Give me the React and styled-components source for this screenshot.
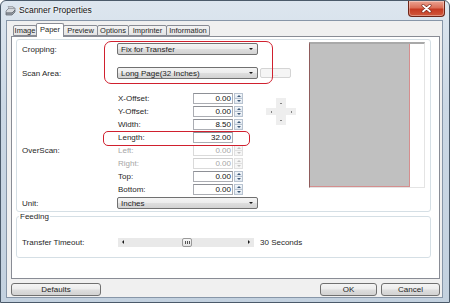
import React from 'react';
import styled, { createGlobalStyle, css } from 'styled-components';

const GlobalStyle = createGlobalStyle`
  * { box-sizing: border-box; }
  html, body { margin: 0; padding: 0; background: #fff; }
  body {
    font-family: "Liberation Sans", Arial, sans-serif;
    font-size: 8px;
    line-height: 9px;
    color: #1f1f1f;
  }
`;

const triangle = (dir, size, color) => {
  const t = `${size}px solid transparent`;
  const c = `${size}px solid ${color}`;
  if (dir === 'up') return css`border-left: ${t}; border-right: ${t}; border-bottom: ${c};`;
  if (dir === 'down') return css`border-left: ${t}; border-right: ${t}; border-top: ${c};`;
  if (dir === 'left') return css`border-top: ${t}; border-bottom: ${t}; border-right: ${c};`;
  return css`border-top: ${t}; border-bottom: ${t}; border-left: ${c};`;
};

const Tri = styled.span`
  display: block;
  width: 0;
  height: 0;
  ${p => triangle(p.$dir, p.$size || 2, p.$color || '#1a1a1a')}
`;

const Window = styled.div`
  width: 450px;
  height: 303px;
  display: flex;
  flex-direction: column;
  border: 1px solid #4b5a6a;
  border-radius: 6px 6px 0 0;
  background: linear-gradient(180deg, #dde6ef 0%, #cbd8e5 35%, #c3d1df 100%);
  overflow: hidden;
`;

const TitleBar = styled.div`
  height: 19px;
  flex: none;
  display: flex;
  align-items: flex-start;
  padding-left: 4px;
`;

const TitleIcon = styled.svg`
  margin-top: 4px;
  flex: none;
`;

const TitleText = styled.span`
  margin: 5px 0 0 3px;
  font-size: 8.5px;
  color: #111;
  text-shadow: 0 0 4px #fff, 0 0 2px #fff;
`;

const CloseButton = styled.div`
  margin-left: auto;
  margin-right: 4px;
  width: 37px;
  height: 16px;
  display: flex;
  align-items: center;
  justify-content: center;
  border: 1px solid #6e2417;
  border-top: none;
  border-radius: 0 0 4px 4px;
  background: linear-gradient(180deg, #eba493 0%, #dc6f58 45%, #c63a22 55%, #d0583c 100%);
  box-shadow: inset 0 0 0 1px rgba(255, 255, 255, 0.35);
`;

const Client = styled.div`
  flex: none;
  height: 278px;
  margin: 0 6px 0 5px;
  background: #f0f0f0;
  border: 1px solid #8796a8;
  padding-top: 2px;
  display: flex;
  flex-direction: column;
`;

const TabRow = styled.div`
  display: flex;
  align-items: flex-end;
  height: 14px;
  padding-left: 7px;
  margin-bottom: -1px;
  position: relative;
  z-index: 1;
`;

const Tab = styled.div`
  width: ${p => p.$w}px;
  height: ${p => (p.$active ? 14 : 11)}px;
  margin-bottom: ${p => (p.$active ? 0 : 1)}px;
  margin-left: -1px;
  display: flex;
  align-items: center;
  justify-content: center;
  font-size: 7.5px;
  border: 1px solid #898c95;
  border-bottom: ${p => (p.$active ? 'none' : '1px solid #898c95')};
  border-radius: 2px 2px 0 0;
  background: ${p => (p.$active ? '#fff' : 'linear-gradient(180deg, #f3f3f3 0%, #e4e4e4 100%)')};
  padding-bottom: ${p => (p.$active ? 2 : 0)}px;
`;

const Panel = styled.div`
  width: 429px;
  height: 243px;
  margin-left: 4px;
  background: #fff;
  border: 1px solid #898c95;
  padding: 2px 0 0 4px;
`;

const GroupBox = styled.div`
  position: relative;
  width: 415px;
  height: 173px;
  border: 1px solid #d5dfe5;
  border-radius: 3px;
  padding: 3px 0 0 5px;
  display: flex;
`;

const FormColumn = styled.div`
  width: 287px;
  flex: none;
`;

const FieldRow = styled.div`
  display: flex;
  align-items: center;
  height: 12px;
  margin-top: ${p => p.$mt || 0}px;
`;

const Label = styled.span`
  width: ${p => p.$w || 95}px;
  flex: none;
  padding-left: ${p => p.$pl || 0}px;
  color: ${p => (p.$disabled ? '#a6a6a6' : '#1f1f1f')};
  white-space: nowrap;
`;

const Select = styled.div`
  width: ${p => p.$w}px;
  height: 12px;
  flex: none;
  display: flex;
  align-items: center;
  justify-content: space-between;
  padding: 0 4px 0 3px;
  border: 1px solid #707070;
  border-radius: 2px;
  background: linear-gradient(180deg, #f4f4f4 0%, #ececec 48%, #dedede 52%, #d2d2d2 100%);
`;

const BrowseButton = styled.div`
  width: 31px;
  height: 10px;
  margin-left: 2px;
  display: flex;
  align-items: flex-end;
  justify-content: center;
  border: 1px solid #d4d4d4;
  border-radius: 2px;
  background: #f5f5f5;
  color: #c0c0c0;
  font-size: 6px;
  line-height: 6px;
`;

const OffsetBlock = styled.div`
  display: flex;
  margin-top: 14px;
`;

const OffsetRows = styled.div`
  display: flex;
  flex-direction: column;
  gap: 2px;
`;

const OffsetRow = styled.div`
  display: grid;
  grid-template-columns: 95px 76px 40px 10px;
  align-items: center;
  height: 11px;
`;

const NumField = styled.div`
  width: 40px;
  height: 11px;
  border: 1px solid ${p => (p.$disabled ? '#dadada' : '#abadb3')};
  border-top-color: ${p => (p.$disabled ? '#d0d0d0' : '#8e9096')};
  background: #fff;
  text-align: right;
  padding-right: 1px;
  line-height: 9px;
  color: ${p => (p.$disabled ? '#a6a6a6' : '#111')};
`;

const Spin = styled.div`
  width: 9px;
  height: 11px;
  margin-left: 1px;
  display: flex;
  flex-direction: column;
`;

const SpinHalf = styled.div`
  flex: 1;
  display: flex;
  align-items: center;
  justify-content: center;
  border: 1px solid ${p => (p.$disabled ? '#e0e0e0' : '#b8c3d0')};
  background: ${p => (p.$disabled ? '#f6f6f6' : 'linear-gradient(180deg, #f5f8fb 0%, #dfe7f0 100%)')};
  & + & { border-top: none; }
`;

const Pad = styled.div`
  margin: 5px 0 0 23px;
  display: grid;
  grid-template-columns: 10px 10px 10px;
  grid-template-rows: 10px 7px 10px;
  align-self: flex-start;
`;

const PadCell = styled.div`
  grid-column: ${p => p.$col};
  grid-row: ${p => p.$row};
  background: #eeeeee;
  display: flex;
  align-items: center;
  justify-content: center;
`;

const Preview = styled.div`
  width: 116px;
  height: 146px;
  margin-top: -1px;
  flex: none;
  background: #fff;
  border: 1px solid #e4e4e4;
  border-left: 1px solid #8f5b5b;
  border-top: 2px solid #a9a9a9;
`;

const Page = styled.div`
  width: 100px;
  height: 100%;
  background: #c0c0c0;
  border-right: 1px solid #d48e8e;
  border-bottom: 1px solid #d48e8e;
`;

const Highlight = styled.div`
  position: absolute;
  left: ${p => p.$x}px;
  top: ${p => p.$y}px;
  width: ${p => p.$w}px;
  height: ${p => p.$h}px;
  border: 1.5px solid #d0202e;
  border-radius: ${p => p.$r}px;
  pointer-events: none;
`;

const Fieldset = styled.fieldset`
  width: 415px;
  margin: 0;
  padding: 0;
  border: 1px solid #d5dfe5;
  border-radius: 3px;
  min-inline-size: 0;
`;

const Legend = styled.legend`
  margin-left: 2px;
  padding: 0 1px;
  line-height: 9px;
`;

const TimeoutRow = styled.div`
  display: flex;
  align-items: center;
  height: 10px;
  margin: 16px 0 10px;
  padding-left: 5px;
`;

const Slider = styled.div`
  position: relative;
  width: 136px;
  height: 9px;
  display: flex;
  align-items: center;
  justify-content: space-between;
  padding: 0 4px;
  background: #e9e9e9;
`;

const Thumb = styled.div`
  position: absolute;
  top: 0;
  left: ${p => p.$pos}px;
  width: 10px;
  height: 9px;
  display: flex;
  align-items: center;
  justify-content: center;
  gap: 1px;
  border: 1px solid #9a9a9a;
  border-radius: 2px;
  background: linear-gradient(180deg, #f7f7f7 0%, #e2e2e2 100%);
`;

const Grip = styled.span`
  width: 1px;
  height: 3px;
  background: #555;
`;

const TimeoutValue = styled.span`
  margin-left: 6px;
`;

const ButtonRow = styled.div`
  display: flex;
  gap: 4px;
  height: 13px;
  margin-top: 4px;
  padding: 0 2px 0 4px;
`;

const Button = styled.div`
  width: ${p => p.$w}px;
  height: 13px;
  margin-right: ${p => (p.$push ? 'auto' : '0')};
  display: flex;
  align-items: center;
  justify-content: center;
  border: 1px solid #707070;
  border-radius: 3px;
  background: linear-gradient(180deg, #f4f4f4 0%, #ececec 48%, #dedede 52%, #d2d2d2 100%);
`;

const tabs = [
  ['Image', 24],
  ['Paper', 28],
  ['Preview', 35],
  ['Options', 32],
  ['Imprinter', 39],
  ['Information', 44],
];

const offsets = [
  { group: '', label: 'X-Offset:', value: '0.00' },
  { group: '', label: 'Y-Offset:', value: '0.00' },
  { group: '', label: 'Width:', value: '8.50' },
  { group: '', label: 'Length:', value: '32.00', noSpin: true },
  { group: 'OverScan:', label: 'Left:', value: '0.00', disabled: true },
  { group: '', label: 'Right:', value: '0.00', disabled: true },
  { group: '', label: 'Top:', value: '0.00' },
  { group: '', label: 'Bottom:', value: '0.00' },
];

function Spinner({ disabled }) {
  const c = disabled ? '#c4c4c4' : '#3d5878';
  return (
    <Spin>
      <SpinHalf $disabled={disabled}><Tri $dir="up" $size={2} $color={c} /></SpinHalf>
      <SpinHalf $disabled={disabled}><Tri $dir="down" $size={2} $color={c} /></SpinHalf>
    </Spin>
  );
}

function ScannerIcon() {
  return (
    <TitleIcon width="11" height="11" viewBox="0 0 11 11">
      <path d="M1 6 L4 3 L10 3 L10 5 L7 8 L1 8 Z" fill="#d6d9dd" stroke="#6a7078" strokeWidth="0.7" />
      <path d="M1 8 L7 8 L10 5 L10 7 L7 10 L1 10 Z" fill="#9aa0a8" stroke="#5a6068" strokeWidth="0.7" />
      <path d="M3 1.5 L8 1.5 L9 3 L4 3 Z" fill="#eef0f2" stroke="#7a8088" strokeWidth="0.6" />
    </TitleIcon>
  );
}

export default function App() {
  const timeout = 30;
  const thumbPos = Math.round((timeout / 60) * 128);

  return (
    <>
      <GlobalStyle />
      <Window>
        <TitleBar>
          <ScannerIcon />
          <TitleText>Scanner Properties</TitleText>
          <CloseButton>
            <svg width="11" height="9" viewBox="0 0 11 9">
              <path d="M2 1.5 L9 7.5 M9 1.5 L2 7.5" stroke="#7a2a1e" strokeWidth="3" strokeLinecap="round" />
              <path d="M2 1.5 L9 7.5 M9 1.5 L2 7.5" stroke="#fff" strokeWidth="1.7" strokeLinecap="round" />
            </svg>
          </CloseButton>
        </TitleBar>

        <Client>
          <TabRow>
            {tabs.map(([name, w]) => (
              <Tab key={name} $w={w} $active={name === 'Paper'}>{name}</Tab>
            ))}
          </TabRow>

          <Panel>
            <GroupBox>
              <FormColumn>
                <FieldRow>
                  <Label>Cropping:</Label>
                  <Select $w={141}>Fix for Transfer<Tri $dir="down" $size={2.5} /></Select>
                </FieldRow>
                <FieldRow $mt={12}>
                  <Label>Scan Area:</Label>
                  <Select $w={141}>Long Page(32 Inches)<Tri $dir="down" $size={2.5} /></Select>
                  <BrowseButton>...</BrowseButton>
                </FieldRow>

                <OffsetBlock>
                  <OffsetRows>
                    {offsets.map(o => (
                      <OffsetRow key={o.label}>
                        <Label>{o.group}</Label>
                        <Label $w={76} $pl={1} $disabled={o.disabled}>{o.label}</Label>
                        <NumField $disabled={o.disabled}>{o.value}</NumField>
                        {o.noSpin ? <span /> : <Spinner disabled={o.disabled} />}
                      </OffsetRow>
                    ))}
                  </OffsetRows>
                  <Pad>
                    <PadCell $col={2} $row={1}><Tri $dir="up" $size={1.5} /></PadCell>
                    <PadCell $col={1} $row={2}><Tri $dir="left" $size={1.5} /></PadCell>
                    <PadCell $col={2} $row={2} />
                    <PadCell $col={3} $row={2}><Tri $dir="right" $size={1.5} /></PadCell>
                    <PadCell $col={2} $row={3}><Tri $dir="down" $size={1.5} /></PadCell>
                  </Pad>
                </OffsetBlock>

                <FieldRow $mt={2}>
                  <Label>Unit:</Label>
                  <Select $w={141}>Inches<Tri $dir="down" $size={2.5} /></Select>
                </FieldRow>
              </FormColumn>

              <Preview>
                <Page />
              </Preview>

              <Highlight $x={87} $y={1} $w={169} $h={43} $r={7} />
              <Highlight $x={86} $y={91} $w={147} $h={15} $r={5} />
            </GroupBox>

            <Fieldset>
              <Legend>Feeding</Legend>
              <TimeoutRow>
                <Label $w={96}>Transfer Timeout:</Label>
                <Slider>
                  <Tri $dir="left" $size={2} />
                  <Tri $dir="right" $size={2} />
                  <Thumb $pos={thumbPos}><Grip /><Grip /><Grip /></Thumb>
                </Slider>
                <TimeoutValue>{timeout} Seconds</TimeoutValue>
              </TimeoutRow>
            </Fieldset>
          </Panel>

          <ButtonRow>
            <Button $w={90} $push>Defaults</Button>
            <Button $w={57}>OK</Button>
            <Button $w={59}>Cancel</Button>
          </ButtonRow>
        </Client>
      </Window>
    </>
  );
}
